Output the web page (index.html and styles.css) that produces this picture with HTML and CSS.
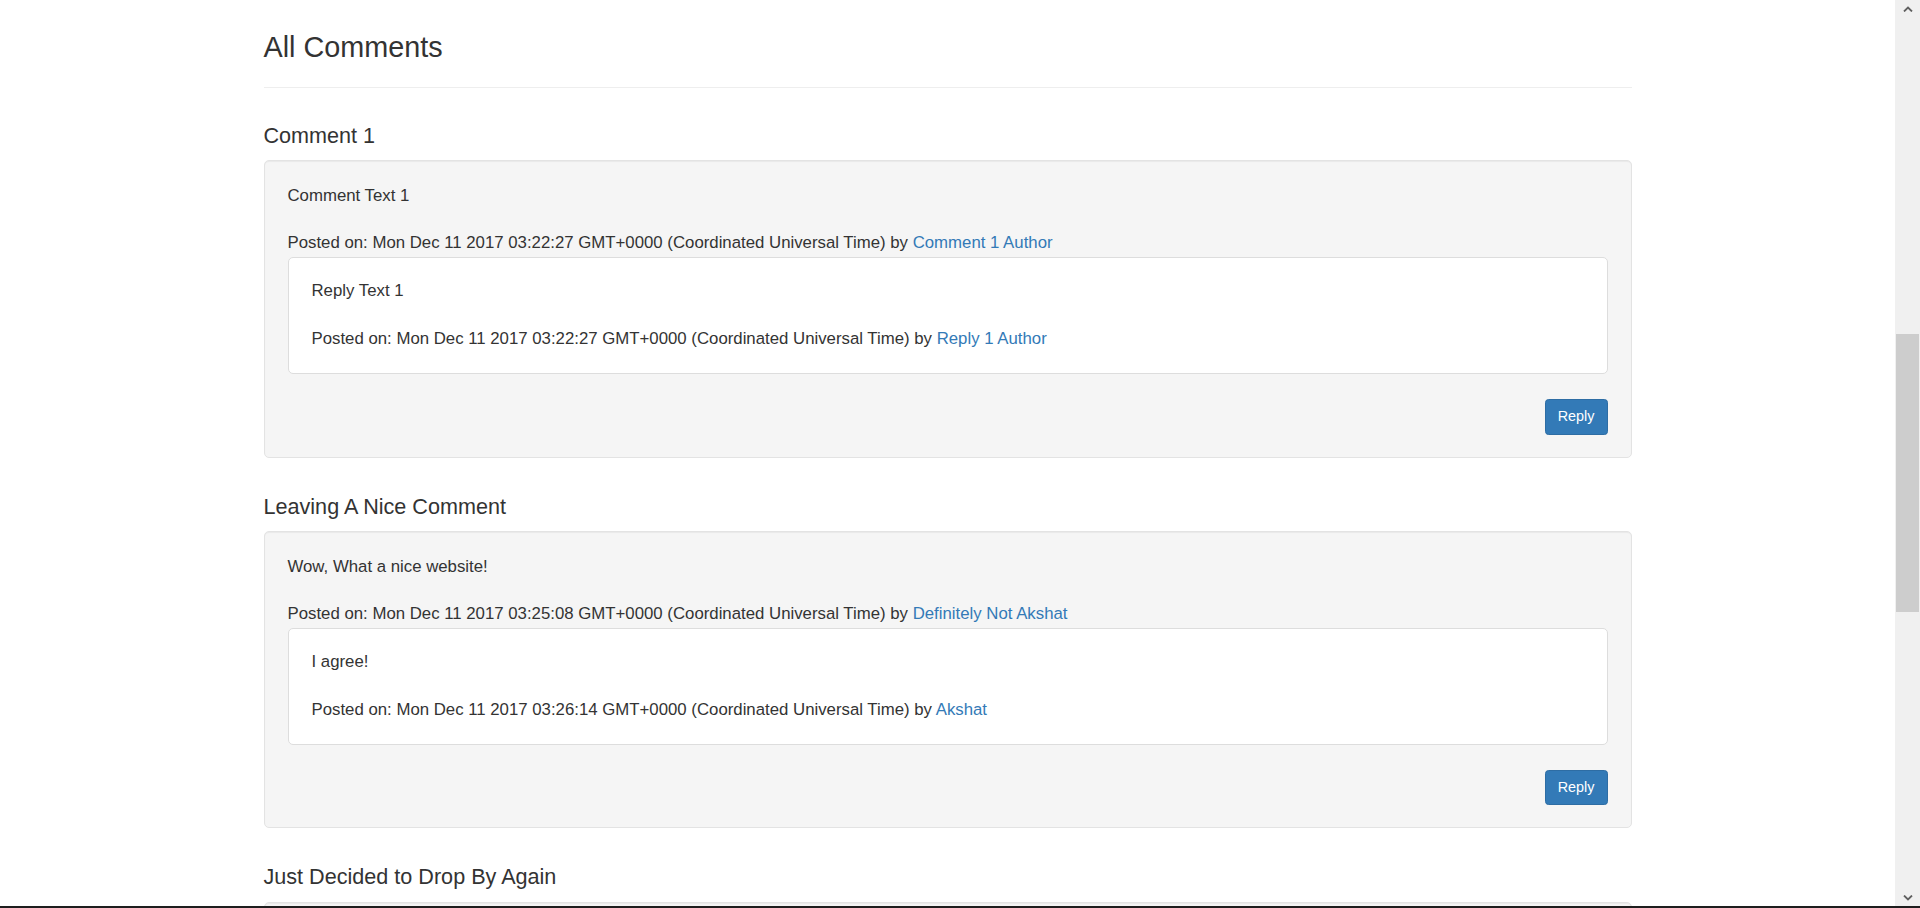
FILE: index.html
```html
<!DOCTYPE html>
<html lang="en">
<head>
<meta charset="utf-8">
<title>All Comments</title>
<link rel="stylesheet" href="styles.css">
</head>
<body>
<div class="window">
  <div class="viewport">
    <main class="container">
      <div class="page-header">
        <h3 class="page-title">All Comments</h3>
      </div>

      <section class="comment">
        <h4 class="comment-title">Comment 1</h4>
        <div class="well">
          <p class="text">Comment Text 1</p>
          <p class="meta">Posted on: Mon Dec 11 2017 03:22:27 GMT+0000 (Coordinated Universal Time) by <a href="#" class="author">Comment 1 Author</a></p>
          <div class="reply">
            <p class="text">Reply Text 1</p>
            <p class="meta">Posted on: Mon Dec 11 2017 03:22:27 GMT+0000 (Coordinated Universal Time) by <a href="#" class="author">Reply 1 Author</a></p>
          </div>
          <div class="actions"><button class="btn">Reply</button></div>
        </div>
      </section>

      <section class="comment">
        <h4 class="comment-title">Leaving A Nice Comment</h4>
        <div class="well">
          <p class="text">Wow, What a nice website!</p>
          <p class="meta">Posted on: Mon Dec 11 2017 03:25:08 GMT+0000 (Coordinated Universal Time) by <a href="#" class="author">Definitely Not Akshat</a></p>
          <div class="reply">
            <p class="text">I agree!</p>
            <p class="meta">Posted on: Mon Dec 11 2017 03:26:14 GMT+0000 (Coordinated Universal Time) by <a href="#" class="author">Akshat</a></p>
          </div>
          <div class="actions"><button class="btn">Reply</button></div>
        </div>
      </section>

      <section class="comment">
        <h4 class="comment-title">Just Decided to Drop By Again</h4>
        <div class="well">
          <p class="text">Just dropping by again!</p>
          <p class="meta">Posted on: Mon Dec 11 2017 03:30:00 GMT+0000 (Coordinated Universal Time) by <a href="#" class="author">Akshat</a></p>
          <div class="actions"><button class="btn">Reply</button></div>
        </div>
      </section>
    </main>
  </div>
  <div class="scrollbar">
    <div class="arrow">
      <svg width="10" height="6" viewBox="0 0 10 6"><path d="M1 5.5 L5 1.5 L9 5.5" fill="none" stroke="#606060" stroke-width="1.8"/></svg>
    </div>
    <div class="track">
      <div class="thumb"></div>
    </div>
    <div class="arrow">
      <svg width="10" height="6" viewBox="0 0 10 6"><path d="M1 0.5 L5 4.5 L9 0.5" fill="none" stroke="#606060" stroke-width="1.8"/></svg>
    </div>
  </div>
</div>
<div class="bottom-line"></div>
</body>
</html>
```

FILE: styles.css
```css
html, body {
  height: 908px;
  margin: 0;
  padding: 0;
  overflow: hidden;
}

body {
  display: flex;
  flex-direction: column;
  font-family: "Liberation Sans", Arial, sans-serif;
  font-size: 16.8px;
  line-height: 24px;
  color: #333333;
  background: #ffffff;
}

.window {
  flex: 1;
  min-height: 0;
  display: flex;
}

.viewport {
  flex: 1;
  min-width: 0;
  overflow: hidden;
}

.container {
  width: 1368px;
  margin: 0 auto;
  padding-top: 32px;
}

.page-header {
  padding-bottom: 23px;
  border-bottom: 1px solid #eeeeee;
  margin-bottom: 36px;
}

.page-title {
  margin: 0;
  font-size: 28.8px;
  line-height: 1.1;
  font-weight: 500;
}

.comment {
  margin-bottom: 37px;
}

.comment-title {
  margin: 0 0 12.5px;
  font-size: 21.6px;
  line-height: 1.1;
  font-weight: 500;
}

.well {
  background: #f5f5f5;
  border: 1px solid #e3e3e3;
  border-radius: 5px;
  box-shadow: inset 0 1px 1px rgba(0, 0, 0, 0.05);
  padding: 23px 23px 22px;
}

.text {
  margin: 0 0 23px;
}

.meta {
  margin: 0 0 2px;
}

.author {
  color: #337ab7;
  text-decoration: none;
}

.reply {
  background: #ffffff;
  border: 1px solid #dddddd;
  border-radius: 5px;
  padding: 21px 23px 22px;
  margin-bottom: 25px;
}

.reply .text {
  margin-bottom: 24px;
}

.reply .meta {
  margin: 0;
}

.actions {
  display: flex;
  justify-content: flex-end;
}

.btn {
  font-family: "Liberation Sans", Arial, sans-serif;
  font-size: 14.4px;
  line-height: 21.6px;
  padding: 6px 12px;
  color: #ffffff;
  background: #337ab7;
  border: 1px solid #2e6da4;
  border-radius: 3.6px;
  cursor: pointer;
}

.scrollbar {
  width: 25px;
  flex: none;
  background: #f0f0f0;
  display: flex;
  flex-direction: column;
}

.arrow {
  height: 17px;
  display: flex;
  align-items: center;
  justify-content: center;
  flex: none;
}

.track {
  flex: 1;
}

.thumb {
  margin: 317px 1px 0 1px;
  height: 278px;
  background: #cdcdcd;
}

.bottom-line {
  height: 2px;
  flex: none;
  background: #1e1e1e;
}
```
